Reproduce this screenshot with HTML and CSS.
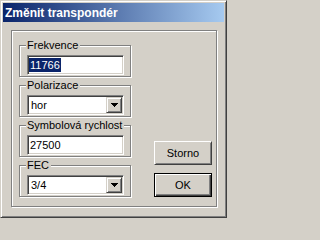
FILE: index.html
```html
<!DOCTYPE html>
<html lang="cs">
<head>
<meta charset="utf-8">
<title>Změnit transpondér</title>
<link rel="stylesheet" href="styles.css">
</head>
<body>
<div class="window">
  <div class="titlebar">Změnit transpondér</div>
  <div class="panel">
    <div class="groups">
      <div class="group">
        <span class="legend">Frekvence</span>
        <div class="field"><span class="sel">11766</span></div>
      </div>
      <div class="group">
        <span class="legend">Polarizace</span>
        <div class="combo">
          <span class="value">hor</span>
          <span class="drop"><svg class="arrow" width="7" height="4" viewBox="0 0 7 4"><path d="M0 0h7v1H0zM1 1h5v1H1zM2 2h3v1H2zM3 3h1v1H3z"/></svg></span>
        </div>
      </div>
      <div class="group">
        <span class="legend">Symbolová rychlost</span>
        <div class="field"><span class="text">27500</span></div>
      </div>
      <div class="group">
        <span class="legend">FEC</span>
        <div class="combo">
          <span class="value">3/4</span>
          <span class="drop"><svg class="arrow" width="7" height="4" viewBox="0 0 7 4"><path d="M0 0h7v1H0zM1 1h5v1H1zM2 2h3v1H2zM3 3h1v1H3z"/></svg></span>
        </div>
      </div>
    </div>
    <div class="buttons">
      <button class="btn" type="button">Storno</button>
      <button class="btn default" type="button">OK</button>
    </div>
  </div>
</div>
</body>
</html>
```

FILE: styles.css
```css
html, body {
  margin: 0;
  padding: 0;
}

body {
  background: #d4d0c8;
  font-family: "Liberation Sans", Arial, sans-serif;
  font-size: 11px;
  color: #000;
}

.window {
  box-sizing: border-box;
  width: 227px;
  height: 218px;
  padding: 2px;
  border: 1px solid;
  border-color: #d4d0c8 #404040 #404040 #d4d0c8;
  box-shadow: inset 1px 1px #fff, inset -1px -1px #808080;
  background: #d4d0c8;
}

.titlebar {
  height: 18px;
  padding: 1px 0 0 2px;
  line-height: 18px;
  background: linear-gradient(to right, #0a246a, #a6caf0);
  color: #fff;
  font-weight: bold;
  font-size: 12px;
  white-space: nowrap;
  overflow: hidden;
}

.panel {
  box-sizing: border-box;
  width: 206px;
  margin: 8px 0 0 8px;
  padding: 14px 4px 9px 7px;
  border: 1px solid #808080;
  box-shadow: inset 1px 1px #fff, 1px 1px #fff;
  display: flex;
}

.groups {
  display: flex;
  flex-direction: column;
  gap: 8px;
  width: 112px;
}

.group {
  box-sizing: border-box;
  height: 32px;
  border: 1px solid #808080;
  box-shadow: inset 1px 1px #fff, 1px 1px #fff;
  display: flex;
  flex-direction: column;
  align-items: flex-start;
}

.legend {
  margin: -7px 0 0 6px;
  padding: 0 2px 0 1px;
  line-height: 13px;
  background: #d4d0c8;
  white-space: nowrap;
}

.field,
.combo {
  box-sizing: border-box;
  width: 97px;
  height: 20px;
  margin: 3px 0 0 7px;
  padding: 1px;
  border: 1px solid;
  border-color: #808080 #fff #fff #808080;
  box-shadow: inset 1px 1px #404040, inset -1px -1px #d4d0c8;
  background: #fff;
  display: flex;
  align-items: center;
  line-height: 16px;
}

.sel {
  background: #0a246a;
  color: #fff;
  line-height: 14px;
  padding: 0 1px;
}

.text {
  padding-left: 1px;
}

.value {
  flex: 1;
  padding-left: 2px;
  white-space: nowrap;
}

.drop {
  box-sizing: border-box;
  width: 16px;
  height: 16px;
  border: 1px solid;
  border-color: #d4d0c8 #404040 #404040 #d4d0c8;
  box-shadow: inset 1px 1px #fff, inset -1px -1px #808080;
  background: #d4d0c8;
  display: flex;
  align-items: center;
  justify-content: center;
}

.arrow {
  display: block;
  shape-rendering: crispEdges;
  fill: #000;
}

.buttons {
  margin-left: auto;
  display: flex;
  flex-direction: column;
  justify-content: flex-end;
  gap: 8px;
}

.btn {
  box-sizing: border-box;
  width: 58px;
  height: 24px;
  margin: 0;
  padding: 0;
  font: inherit;
  color: #000;
  background: #d4d0c8;
  border: 1px solid;
  border-color: #fff #404040 #404040 #fff;
  box-shadow: inset 1px 1px #d4d0c8, inset -1px -1px #808080;
  display: flex;
  align-items: center;
  justify-content: center;
  line-height: 13px;
}

.btn.default {
  border: 1px solid #000;
  box-shadow: inset 1px 1px #fff, inset -1px -1px #404040, inset -2px -2px #808080;
}
```
